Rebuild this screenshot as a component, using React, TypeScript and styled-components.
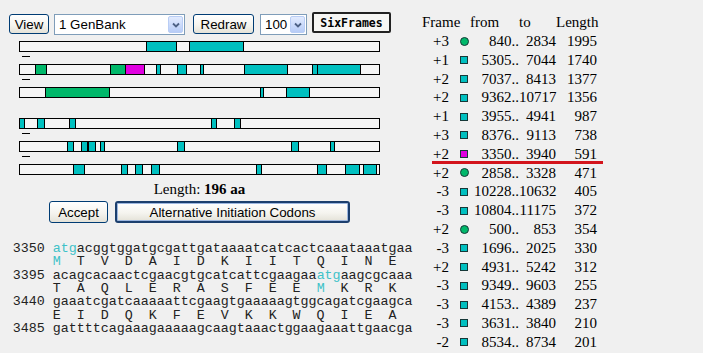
import React from 'react';
import styled, { createGlobalStyle } from 'styled-components';

const GlobalStyle = createGlobalStyle`
  html, body {
    margin: 0;
    padding: 0;
    background: #f0f0f0;
  }
  body {
    width: 703px;
    height: 353px;
    overflow: hidden;
    font-family: "Liberation Serif", "Times New Roman", serif;
    color: #000;
  }
`;

const COLORS: Record<string, string> = {
  teal: '#00c0c0',
  green: '#00b86a',
  magenta: '#e000e0',
};

const Page = styled.div`
  display: flex;
  width: 703px;
  height: 353px;
`;

const LeftPane = styled.div`
  width: 418px;
  display: flex;
  flex-direction: column;
`;

const Toolbar = styled.div`
  display: flex;
  align-items: flex-start;
  height: 23px;
  padding: 12px 0 0 9px;
`;

const XpButton = styled.button<{ $w: number; $gap?: number; $h?: number }>`
  box-sizing: border-box;
  width: ${(p) => p.$w}px;
  height: ${(p) => p.$h ?? 20}px;
  margin: 2px ${(p) => p.$gap ?? 0}px 0 0;
  padding: 0;
  border: 1px solid #003c74;
  border-radius: 3px;
  background: linear-gradient(#ffffff 0%, #f5f4ef 55%, #e4e2d8 100%);
  font-family: "Liberation Sans", Arial, sans-serif;
  font-size: 13.33px;
  color: #000;
`;

const DefaultButton = styled(XpButton)`
  border: 2px solid #1c3f6e;
  box-shadow: inset 0 0 0 1px #9db7e0;
`;

const SixFramesButton = styled.button`
  box-sizing: border-box;
  width: 79px;
  height: 21px;
  margin: 0;
  padding: 0;
  border: 2px solid #222;
  border-radius: 2px;
  background: #f6f6f4;
  font-family: "DejaVu Sans Mono", "Liberation Mono", monospace;
  font-weight: bold;
  font-size: 11.5px;
  color: #000;
`;

const SelectBox = styled.div<{ $w: number; $gap: number }>`
  box-sizing: border-box;
  width: ${(p) => p.$w}px;
  height: 21px;
  margin: 2px ${(p) => p.$gap}px 0 0;
  padding: 0 1px 0 4px;
  border: 1px solid #7f9db9;
  background: #fff;
  display: flex;
  align-items: center;
  justify-content: space-between;
  font-family: "Liberation Sans", Arial, sans-serif;
  font-size: 13.33px;
`;

const SelectArrow = styled.span`
  box-sizing: border-box;
  width: 15px;
  height: 17px;
  border: 1px solid #b9cdf5;
  border-radius: 2px;
  background: linear-gradient(#e2ebfe, #b7ccf7);
  display: flex;
  align-items: center;
  justify-content: center;
`;

const Select = ({ label, w, gap }: { label: string; w: number; gap: number }) => (
  <SelectBox $w={w} $gap={gap}>
    <span>{label}</span>
    <SelectArrow>
      <svg width="8" height="6" viewBox="0 0 8 6">
        <path d="M1 1.5 L4 4.5 L7 1.5" fill="none" stroke="#4d6185" strokeWidth="1.8" />
      </svg>
    </SelectArrow>
  </SelectBox>
);

const Tracks = styled.div`
  margin: 6px 0 0 19px;
  width: 361px;
  display: flex;
  flex-direction: column;
`;

const Strand = styled.div`
  display: flex;
  flex-direction: column;
  & + & {
    margin-top: 20px;
  }
`;

const Bar = styled.div`
  position: relative;
  box-sizing: border-box;
  height: 11px;
  border: 1px solid #000;
  background: #f5f5f5;
`;

const Segment = styled.span<{ $kind: string }>`
  position: absolute;
  top: 0;
  bottom: 0;
  box-sizing: border-box;
  border-left: 1px solid #000;
  border-right: 1px solid #000;
  background: ${(p) => COLORS[p.$kind]};
`;

const Spacer = styled.div`
  height: 12px;
  padding: 4px 0 0 3px;
  box-sizing: border-box;
`;

const Dash = styled.div`
  width: 8px;
  height: 1px;
  background: #000;
`;

const LengthLabel = styled.div`
  margin: 6px 0 0 19px;
  width: 361px;
  text-align: center;
  font-size: 15px;
  line-height: 17px;

  b {
    font-weight: bold;
  }
`;

const ActionRow = styled.div`
  margin: 1px 0 0 19px;
  width: 361px;
  display: flex;
  justify-content: center;
  gap: 7px;
`;

const Sequence = styled.pre`
  margin: 19px 0 0 12.7px;
  font-family: "Liberation Mono", "Courier New", monospace;
  font-size: 13.33px;
  line-height: 13.33px;
  color: #222;
`;

const Start = styled.span`
  color: #3ec2c8;
`;

const RightPane = styled.div`
  padding-top: 12px;
`;

const TableRow = styled.div<{ $h: number; $marked?: boolean }>`
  position: relative;
  display: grid;
  grid-template-columns: 42px 10px 49px 37px 41px;
  align-items: center;
  height: ${(p) => p.$h}px;
  line-height: ${(p) => p.$h}px;
  font-size: 15px;
  white-space: nowrap;

  ${(p) =>
    p.$marked &&
    `&::after {
      content: '';
      position: absolute;
      left: 14px;
      width: 171px;
      bottom: 0;
      height: 3px;
      background: #d3141c;
    }`}
`;

const Cell = styled.span<{ $align: 'left' | 'right'; $pad?: number }>`
  text-align: ${(p) => p.$align};
  padding-${(p) => (p.$align === 'right' ? 'right' : 'left')}: ${(p) => p.$pad ?? 0}px;
`;

const Marker = styled.span<{ $shape: string }>`
  display: block;
  box-sizing: border-box;
  width: ${(p) => (p.$shape === 'circle' ? 9 : 8)}px;
  height: ${(p) => (p.$shape === 'circle' ? 9 : 8)}px;
  border: 1px solid #173838;
  border-radius: ${(p) => (p.$shape === 'circle' ? '50%' : '0')};
  background: ${(p) =>
    p.$shape === 'circle' ? COLORS.green : p.$shape === 'magenta' ? COLORS.magenta : COLORS.teal};
`;

type Seg = [number, number, string];

const tracks: { rows: { segs: Seg[]; dash: boolean }[] }[] = [
  {
    rows: [
      { segs: [[146, 176, 'teal'], [189, 243, 'teal']], dash: true },
      {
        segs: [
          [35, 46, 'green'],
          [110, 125, 'green'],
          [125, 144, 'magenta'],
          [156, 160, 'teal'],
          [177, 186, 'teal'],
          [200, 203, 'teal'],
          [244, 287, 'teal'],
          [312, 317, 'teal'],
          [317, 360, 'teal'],
        ],
        dash: true,
      },
      { segs: [[45, 109, 'green'], [260, 263, 'teal'], [286, 309, 'teal']], dash: false },
    ],
  },
  {
    rows: [
      {
        segs: [[19, 24, 'teal'], [37, 44, 'teal'], [69, 75, 'teal'], [211, 216, 'teal'], [234, 240, 'teal']],
        dash: true,
      },
      {
        segs: [
          [67, 73, 'teal'],
          [81, 87, 'teal'],
          [88, 95, 'teal'],
          [100, 104, 'teal'],
          [177, 184, 'teal'],
          [291, 298, 'teal'],
          [330, 334, 'teal'],
        ],
        dash: true,
      },
      {
        segs: [
          [73, 84, 'teal'],
          [121, 127, 'teal'],
          [135, 142, 'teal'],
          [151, 159, 'teal'],
          [256, 261, 'teal'],
          [317, 326, 'teal'],
          [345, 359, 'teal'],
          [363, 376, 'teal'],
        ],
        dash: false,
      },
    ],
  },
];

const orfs: [string, string, string, string, string][] = [
  ['+3', 'circle', '840..', '2834', '1995'],
  ['+1', 'square', '5305..', '7044', '1740'],
  ['+2', 'square', '7037..', '8413', '1377'],
  ['+2', 'square', '9362..', '10717', '1356'],
  ['+1', 'square', '3955..', '4941', '987'],
  ['+3', 'square', '8376..', '9113', '738'],
  ['+2', 'magenta', '3350..', '3940', '591'],
  ['+2', 'circle', '2858..', '3328', '471'],
  ['-3', 'square', '10228..', '10632', '405'],
  ['-3', 'square', '10804..', '11175', '372'],
  ['+2', 'circle', '500..', '853', '354'],
  ['-3', 'square', '1696..', '2025', '330'],
  ['+2', 'square', '4931..', '5242', '312'],
  ['-3', 'square', '9349..', '9603', '255'],
  ['-3', 'square', '4153..', '4389', '237'],
  ['-3', 'square', '3631..', '3840', '210'],
  ['-2', 'square', '8534..', '8734', '201'],
];

export default function App() {
  return (
    <>
      <GlobalStyle />
      <Page>
        <LeftPane>
          <Toolbar>
            <XpButton $w={40} $gap={5}>View</XpButton>
            <Select label="1 GenBank" w={131} gap={8} />
            <XpButton $w={61} $gap={6}>Redraw</XpButton>
            <Select label="100" w={47} gap={5} />
            <SixFramesButton>SixFrames</SixFramesButton>
          </Toolbar>

          <Tracks>
            {tracks.map((strand, si) => (
              <Strand key={si}>
                {strand.rows.map((row, ri) => (
                  <React.Fragment key={ri}>
                    <Bar>
                      {row.segs.map(([x0, x1, kind], k) => (
                        <Segment
                          key={k}
                          $kind={kind}
                          style={{ left: Math.max(x0 - 20, -1), width: x1 - x0 + 1 }}
                        />
                      ))}
                    </Bar>
                    {ri < strand.rows.length - 1 && <Spacer>{row.dash && <Dash />}</Spacer>}
                  </React.Fragment>
                ))}
              </Strand>
            ))}
          </Tracks>

          <LengthLabel>
            Length: <b>196 aa</b>
          </LengthLabel>
          <ActionRow>
            <XpButton $w={59} $h={22}>Accept</XpButton>
            <DefaultButton $w={235} $h={22}>Alternative Initiation Codons</DefaultButton>
          </ActionRow>

          <Sequence>
            {'3350 '}<Start>atg</Start>{'acggtggatgcgattgataaaatcatcactcaaataaatgaa\n'}
            {'     '}<Start>M</Start>{'  T  V  D  A  I  D  K  I  I  T  Q  I  N  E\n'}
            {'3395 acagcacaactcgaacgtgcatcattcgaagaa'}<Start>atg</Start>{'aagcgcaaa\n'}
            {'     T  A  Q  L  E  R  A  S  F  E  E  '}<Start>M</Start>{'  K  R  K\n'}
            {'3440 gaaatcgatcaaaaattcgaagtgaaaaagtggcagatcgaagca\n'}
            {'     E  I  D  Q  K  F  E  V  K  K  W  Q  I  E  A\n'}
            {'3485 gattttcagaaagaaaaagcaagtaaactggaagaaattgaacga'}
          </Sequence>
        </LeftPane>

        <RightPane>
          <TableRow $h={20}>
            <Cell $align="left" $pad={4}>Frame</Cell>
            <span />
            <Cell $align="left">from</Cell>
            <Cell $align="left">to</Cell>
            <Cell $align="right">Length</Cell>
          </TableRow>
          {orfs.map(([frame, shape, from, to, len], i) => (
            <TableRow key={i} $h={18.8} $marked={shape === 'magenta'}>
              <Cell $align="right" $pad={11}>{frame}</Cell>
              <Marker $shape={shape} />
              <Cell $align="right">{from}</Cell>
              <Cell $align="right">{to}</Cell>
              <Cell $align="right">{len}</Cell>
            </TableRow>
          ))}
        </RightPane>
      </Page>
    </>
  );
}
